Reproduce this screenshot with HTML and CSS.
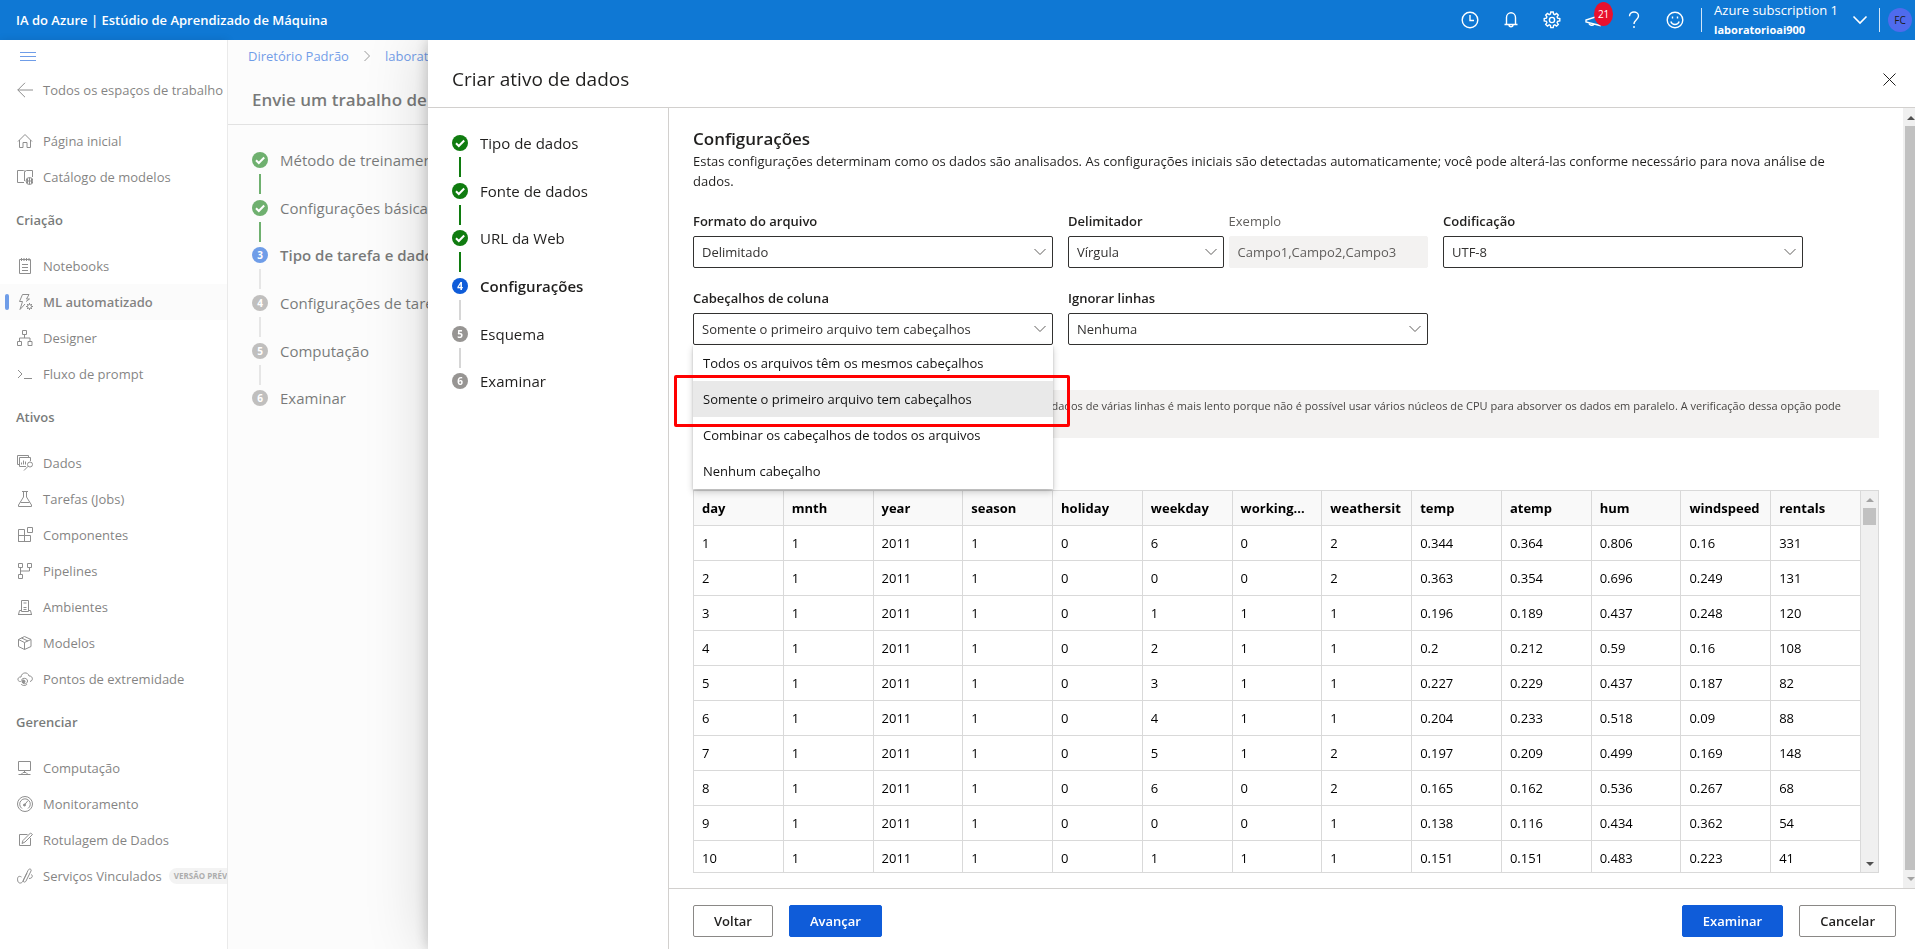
FILE: index.html
```html
<!DOCTYPE html>
<html lang="pt-BR">
<head>
<meta charset="utf-8">
<title>IA do Azure | Estúdio de Aprendizado de Máquina</title>
<link rel="stylesheet" href="styles.css">
</head>
<body>
<header class="topbar">
  <div class="brand">IA do Azure | Estúdio de Aprendizado de Máquina</div>
  <div class="top-actions">
    <button class="icon-btn" aria-label="Recentes"><svg width="18" height="18" viewBox="0 0 18 18"><circle cx="9" cy="9" r="7.8"/><path d="M9 4v5.500h4"/></svg></button>
    <button class="icon-btn" aria-label="Notificações"><svg width="18" height="18" viewBox="0 0 18 18"><path d="M2.500 13.500h13M4.500 13.500V6.500a4.500 4.800 0 0 1 9 0v7M7 13.700a2 2 0 0 0 4 0"/></svg></button>
    <button class="icon-btn" aria-label="Configurações"><svg width="18" height="18" viewBox="0 0 18 18"><circle cx="9" cy="9" r="2.600"/><path d="M7.800 1h2.400l.4 2.100 1.200.5 1.800-1.200 1.700 1.700-1.200 1.800.5 1.200 2.200.5v2.400l-2.200.4-.5 1.200 1.200 1.800-1.700 1.700-1.800-1.200-1.200.5-.4 2.200H7.800l-.4-2.200-1.200-.5-1.800 1.200-1.700-1.700 1.200-1.800-.5-1.200L1.200 10V7.600l2.200-.5.5-1.200-1.200-1.800 1.700-1.700 1.800 1.200 1.200-.5z"/></svg></button>
    <button class="icon-btn" aria-label="Novidades"><svg width="18" height="18" viewBox="0 0 18 18"><path d="M16 4.500 2 9v2l14 3.500zM5 11.800c0 2.800 4.500 3.400 5 1"/></svg><span class="badge">21</span></button>
    <button class="icon-btn" aria-label="Ajuda"><svg width="18" height="18" viewBox="0 0 18 18"><path d="M4.500 5.200C4.500-.5 13.500-.2 13.500 5c0 3.600-4.500 3.800-4.500 8M9 15v2"/></svg></button>
    <button class="icon-btn" aria-label="Comentários"><svg width="18" height="18" viewBox="0 0 18 18"><circle cx="9" cy="9" r="7.800"/><path d="M4.800 10.500c1.500 4 6.900 4 8.400 0M6.500 5.500v2M11.500 5.500v2"/></svg></button>
  </div>
  <div class="account">
    <button class="workspace"><span class="names"><span>Azure subscription 1</span><b>laboratorioai900</b></span><svg width="16" height="16" viewBox="0 0 16 16"><path d="M1.500 4.500 8 11l6.500-6.500"/></svg></button>
    <button class="avatar">FC</button>
  </div>
</header>

<div class="workspace-area">
  <nav class="sidebar">
    <button class="menu-btn" aria-label="Menu"><svg width="16" height="10" viewBox="0 0 16 10"><path d="M0 .5h16M0 4.500h16M0 8.500h16"/></svg></button>
    <a class="nav-item back" href="#"><svg viewBox="0 0 16 16"><path d="M16 8H.7M8 .8.8 8 8 15.200"/></svg>Todos os espaços de trabalho</a>
    <a class="nav-item" href="#"><svg viewBox="0 0 16 16"><path d="M1 8.500 8 1.500l7 7M2.500 7v7.500h3.500V9.500h4v5h3.500V7"/></svg>Página inicial</a>
    <a class="nav-item" href="#"><svg viewBox="0 0 16 16"><path d="M7 13.500H.5V1.500h6c1 0 1.500.5 1.500 1.500 0-1 .5-1.500 1.500-1.500h6V8M7.500 3v9"/><circle cx="12.500" cy="12" r="3.500"/><path d="M9 12h7M12.500 8.500v7M10.500 9.500v5M14.500 9.500v5"/></svg>Catálogo de modelos</a>
    <h2 class="nav-heading">Criação</h2>
    <a class="nav-item" href="#"><svg viewBox="0 0 16 16"><path d="M2.500 1.500h11v14h-11zM4.500 0v3M7 0v3M9.500 0v3M12 0v3M5 6.500h6M5 9.500h6M5 12.500h6"/></svg>Notebooks</a>
    <a class="nav-item active" href="#" aria-current="page"><svg viewBox="0 0 16 16"><path d="M9 7.500 12.500 5H9.500L12 .5H5.500L2.500 7.500h3l-2.500 8 5-5.500"/><circle cx="12.500" cy="12.500" r="2"/><path d="M12.500 9v1.500M12.500 14.500V16M9 12.500h1.500M14.500 12.500H16M10 10l1 1M14 14l1 1M15 10l-1 1M11 14l-1 1"/></svg>ML automatizado</a>
    <a class="nav-item" href="#"><svg viewBox="0 0 16 16"><path d="M5.500.5h4v4h-4zM.5 11.500h4v4h-4zM11 11.500h4v4h-4zM7.500 4.500V8M2.500 11.500V8h10.500v3.500"/></svg>Designer</a>
    <a class="nav-item" href="#"><svg viewBox="0 0 16 16"><path d="M1 4l4 4-4 4M7 12.500h8"/></svg>Fluxo de prompt</a>
    <h2 class="nav-heading">Ativos</h2>
    <a class="nav-item" href="#"><svg viewBox="0 0 16 16"><path d="M9 11.500H2.500v-9h11V6M2.500 9.500h-2v-9h11v2M4.500 9.500v-2M6.500 9.500v-4M8.500 9.500v-3"/><circle cx="13" cy="9.500" r="2.500"/><path d="M11.200 11.200 7 15.500"/></svg>Dados</a>
    <a class="nav-item" href="#"><svg viewBox="0 0 16 16"><path d="M5 .5h6M6.500.5V6L1.500 14v1.500h13V14l-5-8V.5M3.500 11.500h9"/></svg>Tarefas (Jobs)</a>
    <a class="nav-item" href="#"><svg viewBox="0 0 16 16"><path d="M1.500 2.500h6v12h-6zM1.500 8.500h12v6h-12zM10.500.5h5v5h-5z"/></svg>Componentes</a>
    <a class="nav-item" href="#"><svg viewBox="0 0 16 16"><path d="M1.500.5h4v4h-4zM10.500.5h4v4h-4zM1.500 11.500h4v4h-4zM3.500 4.500v7M3.500 8h9V4.500"/></svg>Pipelines</a>
    <a class="nav-item" href="#"><svg viewBox="0 0 16 16"><path d="M4.500 12.500V1.500h7v11zM1.500 15.500l1-4h2M14.500 15.500l-1-4h-2M1 15.500h14M6.500 4h3M6.500 8.500h3M6.500 10.500h3"/></svg>Ambientes</a>
    <a class="nav-item" href="#"><svg viewBox="0 0 16 16"><path d="M7.500 1.500 14 4.500v7l-6.500 3-6-3v-7zM1.500 4.500l6 3 6.500-3M7.500 7.500v7M4.500 3l6.500 3"/></svg>Modelos</a>
    <a class="nav-item" href="#"><svg viewBox="0 0 16 16"><path d="M4 10.500H3.500C-.5 10.500.5 5.500 4 6c.5-5 7-5.500 8-1 4-.5 4.500 5 1 5.500M4.500 9.500c0-3 6-3 6 .5s-5 3.500-5 1"/><circle cx="6.500" cy="10.500" r="1.500" fill="currentColor"/><path d="M4 13c1.500 2 5 2 6 0"/></svg>Pontos de extremidade</a>
    <h2 class="nav-heading">Gerenciar</h2>
    <a class="nav-item" href="#"><svg viewBox="0 0 16 16"><path d="M1.500 1.500h12v9h-12zM7.500 10.500v2M4 14.500l2-2h3l2 2zM1.500 14.500h12"/></svg>Computação</a>
    <a class="nav-item" href="#"><svg viewBox="0 0 16 16"><circle cx="8" cy="8" r="7.500"/><path d="M5 12.500a5.300 5.300 0 1 1 6 0M7 9.500l4-5"/><circle cx="7.500" cy="9" r="1" fill="currentColor"/></svg>Monitoramento</a>
    <a class="nav-item" href="#"><svg viewBox="0 0 16 16"><path d="M10.500 2.500h-8v11h11V6M5 11.500l1-3L13.500 1l2 1.500L8 10z"/></svg>Rotulagem de Dados</a>
    <a class="nav-item" href="#"><svg viewBox="0 0 16 16"><path d="M4.500 9C1 7 0 10 .8 13c.7 3 4.200 2.500 5.200 0l5-10.500c1-2.500 4-1.500 3 .5L9 13c-1 2-3.500 1-2.500-1L10 5M12 10.500c4 0 4-3.500 2-4"/></svg>Serviços Vinculados<span class="tag">VERSÃO PRÉVIA</span></a>
  </nav>
  <main class="job">
    <div class="crumbs"><a href="#">Diretório Padrão</a><svg width="8" height="12" viewBox="0 0 8 12"><path d="M1.500 1 6.500 6l-5 5"/></svg><a href="#">laboratorioai900</a></div>
    <h1 class="job-title">Envie um trabalho de ML automatizado</h1>
    <ol class="steps job-steps">
      <li class="done"><span class="dot"><svg viewBox="0 0 16 16"><path d="M4 8.200l2.800 2.800L12.200 5.500"/></svg></span>Método de treinamento</li>
      <li class="done"><span class="dot"><svg viewBox="0 0 16 16"><path d="M4 8.200l2.800 2.800L12.200 5.500"/></svg></span>Configurações básicas</li>
      <li class="current"><span class="dot">3</span>Tipo de tarefa e dados</li>
      <li><span class="dot">4</span>Configurações de tarefa</li>
      <li><span class="dot">5</span>Computação</li>
      <li><span class="dot">6</span>Examinar</li>
    </ol>
  </main>
  <div class="veil"></div>
</div>

<section class="panel" role="dialog" aria-labelledby="panel-title">
  <header class="panel-head">
    <h2 id="panel-title">Criar ativo de dados</h2>
    <button class="close" aria-label="Fechar"><svg width="13" height="13" viewBox="0 0 13 13"><path d="M.5.5l12 12M12.500.5l-12 12"/></svg></button>
  </header>
  <div class="panel-body">
    <aside class="panel-steps">
      <ol class="steps">
        <li class="done"><span class="dot"><svg viewBox="0 0 16 16"><path d="M4 8.200l2.800 2.800L12.200 5.500"/></svg></span>Tipo de dados</li>
        <li class="done"><span class="dot"><svg viewBox="0 0 16 16"><path d="M4 8.200l2.800 2.800L12.200 5.500"/></svg></span>Fonte de dados</li>
        <li class="done"><span class="dot"><svg viewBox="0 0 16 16"><path d="M4 8.200l2.800 2.800L12.200 5.500"/></svg></span>URL da Web</li>
        <li class="current"><span class="dot">4</span>Configurações</li>
        <li><span class="dot">5</span>Esquema</li>
        <li><span class="dot">6</span>Examinar</li>
      </ol>
    </aside>
    <div class="panel-main">
      <div class="scroll">
        <div class="content">
          <h3>Configurações</h3>
          <p class="intro">Estas configurações determinam como os dados são analisados. As configurações iniciais são detectadas automaticamente; você pode alterá-las conforme necessário para nova análise de dados.</p>
          <div class="fields">
            <div class="field">
              <label for="format">Formato do arquivo</label>
              <div class="select"><select id="format"><option>Delimitado</option></select><svg viewBox="0 0 12 12"><path d="M.5 3 6 8.500 11.500 3"/></svg></div>
            </div>
            <div class="pair">
              <div class="field delimiter">
                <label for="delim">Delimitador</label>
                <div class="select"><select id="delim"><option>Vírgula</option></select><svg viewBox="0 0 12 12"><path d="M.5 3 6 8.500 11.500 3"/></svg></div>
              </div>
              <div class="field sample">
                <label for="sample">Exemplo</label>
                <input id="sample" type="text" value="Campo1,Campo2,Campo3" disabled>
              </div>
            </div>
            <div class="field">
              <label for="enc">Codificação</label>
              <div class="select"><select id="enc"><option>UTF-8</option></select><svg viewBox="0 0 12 12"><path d="M.5 3 6 8.500 11.500 3"/></svg></div>
            </div>
            <div class="field">
              <label for="headers">Cabeçalhos de coluna</label>
              <div class="select"><select id="headers"><option>Somente o primeiro arquivo tem cabeçalhos</option></select><svg viewBox="0 0 12 12"><path d="M.5 3 6 8.500 11.500 3"/></svg>
                <div class="menu" role="listbox">
                  <button class="option" role="option">Todos os arquivos têm os mesmos cabeçalhos</button>
                  <button class="option selected" role="option" aria-selected="true">Somente o primeiro arquivo tem cabeçalhos</button>
                  <button class="option" role="option">Combinar os cabeçalhos de todos os arquivos</button>
                  <button class="option" role="option">Nenhum cabeçalho</button>
                </div>
              </div>
            </div>
            <div class="field">
              <label for="skip">Ignorar linhas</label>
              <div class="select"><select id="skip"><option>Nenhuma</option></select><svg viewBox="0 0 12 12"><path d="M.5 3 6 8.500 11.500 3"/></svg></div>
            </div>
          </div>
          <p class="note">dados de várias linhas é mais lento porque não é possível usar vários núcleos de CPU para absorver os dados em paralelo. A verificação dessa opção pode</p>
          <div class="grid-box">
            <div class="grid-view">
              <table>
                <thead><tr><th>day</th><th>mnth</th><th>year</th><th>season</th><th>holiday</th><th>weekday</th><th title="workingday">working...</th><th>weathersit</th><th>temp</th><th>atemp</th><th>hum</th><th>windspeed</th><th>rentals</th></tr></thead>
                <tbody>
                  <tr><td>1</td><td>1</td><td>2011</td><td>1</td><td>0</td><td>6</td><td>0</td><td>2</td><td>0.344</td><td>0.364</td><td>0.806</td><td>0.16</td><td>331</td></tr>
                  <tr><td>2</td><td>1</td><td>2011</td><td>1</td><td>0</td><td>0</td><td>0</td><td>2</td><td>0.363</td><td>0.354</td><td>0.696</td><td>0.249</td><td>131</td></tr>
                  <tr><td>3</td><td>1</td><td>2011</td><td>1</td><td>0</td><td>1</td><td>1</td><td>1</td><td>0.196</td><td>0.189</td><td>0.437</td><td>0.248</td><td>120</td></tr>
                  <tr><td>4</td><td>1</td><td>2011</td><td>1</td><td>0</td><td>2</td><td>1</td><td>1</td><td>0.2</td><td>0.212</td><td>0.59</td><td>0.16</td><td>108</td></tr>
                  <tr><td>5</td><td>1</td><td>2011</td><td>1</td><td>0</td><td>3</td><td>1</td><td>1</td><td>0.227</td><td>0.229</td><td>0.437</td><td>0.187</td><td>82</td></tr>
                  <tr><td>6</td><td>1</td><td>2011</td><td>1</td><td>0</td><td>4</td><td>1</td><td>1</td><td>0.204</td><td>0.233</td><td>0.518</td><td>0.09</td><td>88</td></tr>
                  <tr><td>7</td><td>1</td><td>2011</td><td>1</td><td>0</td><td>5</td><td>1</td><td>2</td><td>0.197</td><td>0.209</td><td>0.499</td><td>0.169</td><td>148</td></tr>
                  <tr><td>8</td><td>1</td><td>2011</td><td>1</td><td>0</td><td>6</td><td>0</td><td>2</td><td>0.165</td><td>0.162</td><td>0.536</td><td>0.267</td><td>68</td></tr>
                  <tr><td>9</td><td>1</td><td>2011</td><td>1</td><td>0</td><td>0</td><td>0</td><td>1</td><td>0.138</td><td>0.116</td><td>0.434</td><td>0.362</td><td>54</td></tr>
                  <tr><td>10</td><td>1</td><td>2011</td><td>1</td><td>0</td><td>1</td><td>1</td><td>1</td><td>0.151</td><td>0.151</td><td>0.483</td><td>0.223</td><td>41</td></tr>
                </tbody>
              </table>
            </div>
            <div class="bar"><i class="arrow up muted"></i><i class="thumb short"></i><i class="arrow down"></i></div>
          </div>
        </div>
        <div class="bar outer"><i class="arrow up"></i><i class="thumb"></i><i class="arrow down muted"></i></div>
      </div>
      <footer class="panel-foot">
        <button class="btn">Voltar</button>
        <button class="btn primary">Avançar</button>
        <span class="spacer"></span>
        <button class="btn primary">Examinar</button>
        <button class="btn">Cancelar</button>
      </footer>
    </div>
  </div>
</section>
</body>
</html>
```

FILE: styles.css
```css
* { box-sizing: border-box; }

body {
  margin: 0;
  height: 100vh;
  display: flex;
  flex-direction: column;
  overflow: hidden;
  font: 13px/20px "Open Sans", "Noto Sans", sans-serif;
  color: #201f1e;
  background: #fff;
}

h1, h2, h3, p, ol { margin: 0; padding: 0; }
button { font: inherit; color: inherit; background: none; border: 0; padding: 0; }
a { color: inherit; text-decoration: none; }
svg { fill: none; stroke: currentColor; flex: none; }

/* Top bar */
.topbar {
  height: 40px;
  flex: none;
  display: flex;
  align-items: center;
  padding: 0 3px 0 16px;
  color: #fff;
  background: #0f78d4;
}
.brand { flex: 1; font-weight: 600; }
.top-actions { display: flex; gap: 23px; margin-right: 17px; }
.icon-btn { position: relative; display: flex; }
.icon-btn svg { stroke-width: 1.4; }
.badge {
  position: absolute;
  left: 10px;
  top: -9px;
  width: 19px;
  height: 24px;
  border-radius: 50%;
  background: #e8112d;
  font-size: 10px;
  line-height: 24px;
}
.account { display: flex; align-items: center; gap: 8px; }
.workspace {
  display: flex;
  align-items: center;
  gap: 14px;
  padding: 0 11px 0 12px;
  height: 24px;
  border-left: 1px solid #d0e4f7;
  border-right: 1px solid #d0e4f7;
  text-align: left;
}
.workspace svg { stroke-width: 1.6; }
.names { display: flex; flex-direction: column; }
.names b { font-size: 11px; }
.avatar {
  width: 24px;
  height: 24px;
  border-radius: 50%;
  background: #4f6bed;
  color: #1b1a19;
  font-size: 10px;
}

/* Page under the panel */
.workspace-area { flex: 1; display: flex; min-height: 0; position: relative; }
.veil { position: absolute; inset: 0; background: rgba(255, 255, 255, .4); }

.sidebar {
  width: 228px;
  flex: none;
  overflow: hidden;
  white-space: nowrap;
  border-right: 1px solid #dcdcdc;
  box-shadow: 0 0 8px rgba(0, 0, 0, .1);
}
.menu-btn { display: flex; height: 32px; padding: 12px 20px; color: #0f5cd9; }
.nav-item {
  height: 36px;
  display: flex;
  align-items: center;
  gap: 10px;
  padding-left: 17px;
  position: relative;
  color: #323130;
}
.nav-item svg { width: 16px; height: 16px; color: #444; }
.back { margin-bottom: 15px; }
.nav-heading { height: 53px; padding-left: 16px; font-size: 13px; font-weight: 600; line-height: 50px; }
.active { background: #f9f9f9; font-weight: 600; }
.active::before {
  content: "";
  position: absolute;
  left: 5px;
  top: 10px;
  width: 4px;
  height: 16px;
  border-radius: 2px;
  background: #0f5cd9;
}
.tag {
  margin-left: -3px;
  padding: 0 5px;
  border-radius: 8px;
  background: #ebebeb;
  color: #767676;
  font-size: 8px;
  font-weight: 700;
  line-height: 16px;
}

.job { flex: 1; background: #fafafa; min-width: 0; }
.crumbs { display: flex; align-items: center; gap: 14px; padding: 6px 20px 0; color: #0f5cd9; }
.crumbs svg { color: #555; }
.job-title {
  height: 59px;
  padding: 18px 24px 0;
  border-bottom: 1px solid #cfcfcf;
  font-size: 17px;
  font-weight: 600;
  line-height: 32px;
}

/* Step lists */
.steps {
  list-style: none;
  display: grid;
  grid-auto-rows: 1fr;
  height: 286px;
  font-size: 15px;
  line-height: 16px;
}
.steps li { display: flex; gap: 12px; position: relative; white-space: nowrap; }
.steps li:not(:last-child)::after {
  content: "";
  position: absolute;
  left: 7px;
  top: 22px;
  width: 2px;
  height: 20px;
  background: #d6d6d6;
}
.steps .done:not(:last-child)::after { background: #107c10; }
.dot {
  width: 16px;
  height: 16px;
  border-radius: 50%;
  background: #979593;
  color: #fff;
  font-size: 10px;
  font-weight: 700;
  text-align: center;
}
.dot svg { display: block; stroke-width: 2; }
.done .dot { background: #107c10; }
.current { font-weight: 600; }
.current .dot { background: #0f5cd9; }
.job-steps { margin: 27px 24px; }

/* Side panel */
.panel {
  position: fixed;
  inset: 40px 0 0 428px;
  display: flex;
  flex-direction: column;
  background: #fff;
  box-shadow: 0 0 14px rgba(0, 0, 0, .22), 0 0 60px rgba(0, 0, 0, .16);
  clip-path: inset(0 0 0 -80px);
}
.panel-head {
  height: 68px;
  flex: none;
  display: flex;
  align-items: center;
  justify-content: space-between;
  padding: 11px 19px 0 24px;
  border-bottom: 1px solid #d2d0ce;
}
.panel-head h2 { font-size: 19px; font-weight: 400; line-height: 28px; }
.close { display: flex; }
.panel-body { flex: 1; display: flex; min-height: 0; }
.panel-steps { width: 241px; flex: none; padding: 27px 24px; border-right: 1px solid #d2d0ce; }
.panel-main { flex: 1; display: flex; flex-direction: column; min-width: 0; }
.scroll { flex: 1; display: flex; min-height: 0; overflow: hidden; }
.content { flex: 1; display: flex; flex-direction: column; min-width: 0; padding: 19px 24px 15px; }
.content h3 { font-size: 17px; font-weight: 600; line-height: 24px; }
.intro { padding-right: 20px; margin-bottom: 20px; }

.fields { display: grid; grid-template-columns: repeat(3, minmax(0, 360px)); gap: 20px 15px; }
.field { display: flex; flex-direction: column; gap: 5px; }
.field label { font-weight: 600; }
.pair { display: flex; gap: 5px; }
.delimiter { flex: 156; min-width: 0; }
.sample { flex: 200; min-width: 0; }
.sample label { font-weight: 400; color: #605e5c; }
.select { position: relative; }
.select > svg { position: absolute; right: 7px; top: 10px; width: 12px; height: 12px; pointer-events: none; color: #605e5c; }
select, input {
  display: block;
  appearance: none;
  width: 100%;
  height: 32px;
  padding: 0 8px;
  border: 1px solid #323130;
  border-radius: 2px;
  background: #fff;
  color: #323130;
  font: inherit;
}
input:disabled { border-color: #f3f2f1; background: #f3f2f1; color: #605e5c; }

.menu {
  position: absolute;
  z-index: 2;
  top: 100%;
  left: 0;
  width: 100%;
  background: #fff;
  box-shadow: 0 3px 7px rgba(0, 0, 0, .2), 0 1px 2px rgba(0, 0, 0, .18);
}
.option { display: block; position: relative; width: 100%; height: 36px; padding: 0 10px; text-align: left; color: #111; }
.selected { background: #e9e9e9; z-index: 1; }
.selected::after {
  content: "";
  position: absolute;
  inset: -6px -17px -10px -19px;
  border: 3px solid #f00;
  border-radius: 2px;
}

.note {
  margin: 45px 0 52px;
  height: 48px;
  padding: 6px 38px 6px 24px;
  background: #f3f2f1;
  color: #484644;
  font-size: 11px;
  text-align: right;
  white-space: nowrap;
}

/* Data preview */
.grid-box { flex: 1; display: flex; min-height: 0; border: 1px solid #d9d9d9; }
.grid-view { flex: 1; min-width: 0; overflow: hidden; }
table { width: 100%; table-layout: fixed; border-collapse: separate; border-spacing: 0; color: #000; }
th, td {
  height: 35px;
  padding: 0 8px;
  border: 0 solid #d9d9d9;
  border-width: 0 1px 1px 0;
  text-align: left;
  white-space: nowrap;
  overflow: hidden;
  text-overflow: ellipsis;
}
th { background: #f9f9f9; font-weight: 700; }

/* Scroll tracks */
.bar { width: 17px; flex: none; display: flex; flex-direction: column; align-items: center; background: #f0f0f0; }
.outer { width: 12px; align-items: flex-end; padding: 1px 0; }
.thumb { flex: 1; width: 13px; background: #c1c1c1; }
.outer .thumb { width: 10px; }
.short { flex: none; height: 17px; margin-bottom: auto; }
.arrow { border: 4px solid transparent; margin: 7px 0 6px; height: 4px; }
.up { border-top: 0; border-bottom-color: #505050; }
.down { border-bottom: 0; border-top-color: #505050; }
.up.muted { border-bottom-color: #a3a3a3; }
.down.muted { border-top-color: #a3a3a3; }

.panel-foot {
  height: 61px;
  flex: none;
  display: flex;
  align-items: center;
  gap: 16px;
  padding: 4px 19px 0 24px;
  border-top: 1px solid #d2d0ce;
}
.spacer { flex: 1; }
.btn { height: 32px; padding: 0 20px; border: 1px solid #8a8886; border-radius: 2px; font-weight: 600; }
.primary { border-color: #0f5cd9; background: #0f5cd9; color: #fff; }
```
